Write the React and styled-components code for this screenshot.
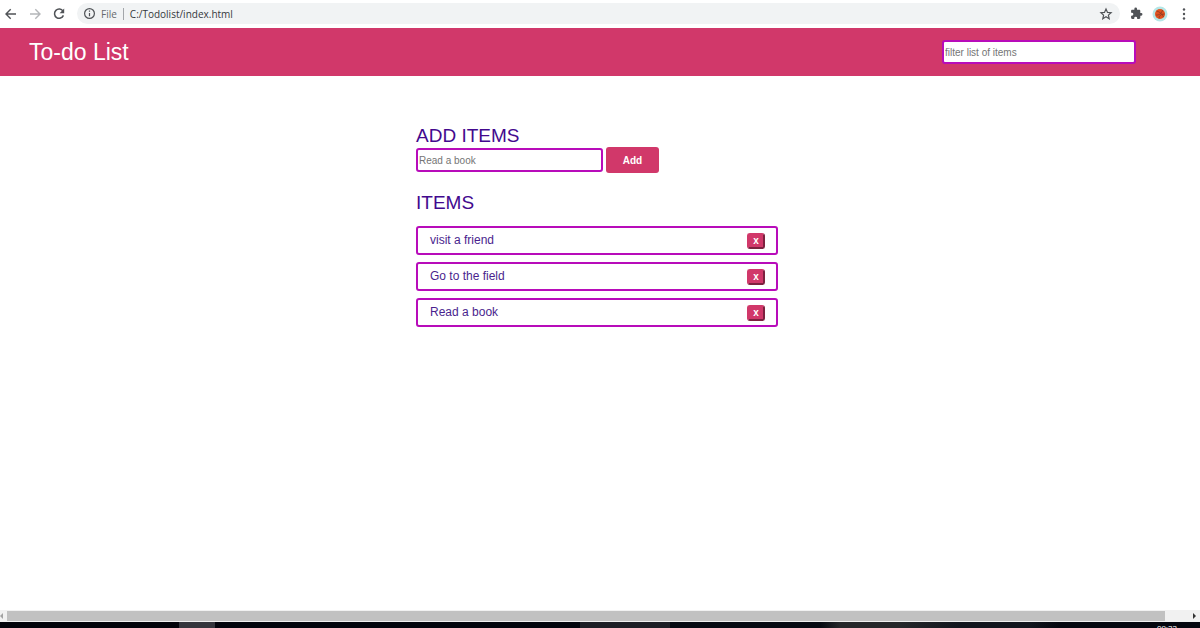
import React, { useState } from "react";
import styled, { createGlobalStyle } from "styled-components";

const GlobalStyle = createGlobalStyle`
  * { box-sizing: border-box; }
  body { margin: 0; background: #fff; font-family: "Liberation Sans", Arial, sans-serif; }
  button, input { font-family: inherit; margin: 0; }
`;

const Window = styled.div`
  display: flex;
  flex-direction: column;
  height: 100vh;
  overflow: hidden;
`;

const BrowserBar = styled.nav`
  display: flex;
  align-items: center;
  flex: none;
  height: 28px;
  padding: 0 8px 1px 3px;
  gap: 8px;
`;

const IconButton = styled.button`
  display: flex;
  align-items: center;
  justify-content: center;
  flex: none;
  width: 16px;
  height: 16px;
  padding: 0;
  border: 0;
  background: none;
  color: ${(p) => (p.$faded ? "#b4b6b9" : "#505357")};
`;

const AddressBar = styled.div`
  display: flex;
  align-items: center;
  flex: 1;
  height: 21px;
  padding: 0 6px 0 5px;
  margin-left: 2px;
  border-radius: 11px;
  background: #f1f3f4;
  font: 10px/16px "Open Sans", "Noto Sans", sans-serif;
  color: #66696d;
`;

const Scheme = styled.span`
  margin-left: 4px;
  padding-right: 6px;
  border-right: 1px solid #a3a6aa;
  line-height: 12px;
`;

const Url = styled.span`
  flex: 1;
  margin-left: 6px;
  color: #35383c;
`;

const Tools = styled.div`
  display: flex;
  align-items: center;
  gap: 8px;
`;

const Header = styled.header`
  display: flex;
  align-items: center;
  justify-content: space-between;
  flex: none;
  height: 48px;
  padding: 0 64px 0 29px;
  background: #d1386a;
`;

const Title = styled.h1`
  margin: 0;
  font-size: 23px;
  line-height: 28px;
  font-weight: 400;
  color: #fff;
`;

const TextBox = styled.input`
  width: ${(p) => p.$width};
  height: 24px;
  padding: 0 1px;
  border: 2px solid #b80cba;
  border-radius: 3px;
  background: #fff;
  font-size: 10px;
  color: #333;
  outline: none;
  &::placeholder { color: #757575; opacity: 1; }
`;

const Page = styled.main`
  flex: 1;
  padding: 49px 6px 0 0;
`;

const Content = styled.div`
  width: 362px;
  max-width: 100%;
  margin: 0 auto;
`;

const Heading = styled.h2`
  margin: 0;
  font-size: 19px;
  line-height: 22px;
  font-weight: 400;
  color: #42098e;
`;

const AddForm = styled.form`
  display: flex;
  align-items: center;
  gap: 3px;
  margin-bottom: 19px;
`;

const AddButton = styled.button`
  width: 53px;
  height: 26px;
  padding: 0;
  border: 0;
  border-radius: 3px;
  background: #d1386a;
  color: #fff;
  font-size: 10px;
  font-weight: 700;
`;

const List = styled.ul`
  display: flex;
  flex-direction: column;
  gap: 7px;
  margin: 12px 0 0;
  padding: 0;
  list-style: none;
`;

const Item = styled.li`
  display: flex;
  align-items: flex-start;
  justify-content: space-between;
  height: 29px;
  padding: 4px 11px 0 12px;
  border: 2px solid #b80cba;
  border-radius: 3px;
  font-size: 12px;
  line-height: 16px;
  color: #4a1f8e;
`;

const RemoveButton = styled.button`
  width: 18px;
  height: 16px;
  margin-top: 1px;
  padding: 0;
  border: 2px outset #d1386a;
  border-radius: 3px;
  background: #d1386a;
  color: #fff;
  font-size: 10px;
  line-height: 12px;
  font-weight: 700;
`;

const ScrollBar = styled.div`
  display: flex;
  align-items: center;
  flex: none;
  height: 12px;
  background: #f1f1f1;
`;

const Thumb = styled.div`
  flex: 1;
  height: 10px;
  background: #c1c1c1;
`;

const ScrollEnd = styled.div`
  display: flex;
  align-items: center;
  justify-content: flex-end;
  width: ${(p) => p.$width};
  padding-right: 4px;
`;

const TaskBar = styled.footer`
  display: flex;
  justify-content: flex-end;
  flex: none;
  height: 6px;
  padding-right: 23px;
  overflow: hidden;
  background: linear-gradient(90deg, #02030a 0 179px, #34353c 179px 215px, #02040c 215px 580px, #1c1e25 580px 670px, #060a12 670px 820px, #25272a 840px 900px, #11151d 960px 1030px, #04060e 1060px);
`;

const Clock = styled.time`
  font-size: 8px;
  line-height: 14px;
  color: #fff;
`;

const BackIcon = () => (
  <svg width="16" height="16" viewBox="0 0 16 16" fill="none" stroke="currentColor" strokeWidth="1.4">
    <path d="M13 8H3M7.7 3.2 3 8l4.700 4.800" />
  </svg>
);

const ForwardIcon = () => (
  <svg width="16" height="16" viewBox="0 0 16 16" fill="none" stroke="currentColor" strokeWidth="1.4">
    <path d="M3 8h10M8.300 3.200 13 8l-4.700 4.800" />
  </svg>
);

const ReloadIcon = () => (
  <svg width="16" height="16" viewBox="0 0 16 16" fill="none">
    <path d="M12 5.2A4.6 4.6 0 1 0 12.4 9.4" stroke="currentColor" strokeWidth="1.5" />
    <path d="M13.2 2.6v4.6H8.6z" fill="currentColor" />
  </svg>
);

const InfoIcon = () => (
  <svg width="15" height="15" viewBox="0 0 15 15" fill="none" stroke="#4f5256" strokeWidth="1.2">
    <circle cx="7.5" cy="7.5" r="4.9" />
    <path d="M7.5 7v3.2M7.5 4.6v1.2" />
  </svg>
);

const StarIcon = () => (
  <svg width="16" height="16" viewBox="0 0 16 16" fill="none" stroke="currentColor" strokeWidth="1.2">
    <path d="m8 3 1.5 3.4 3.6.3-2.7 2.4.8 3.6L8 10.8l-3.2 1.9.8-3.6-2.7-2.4 3.6-.3z" />
  </svg>
);

const PuzzleIcon = () => (
  <svg width="13" height="13" viewBox="0 0 24 24" fill="currentColor">
    <path d="M20.5 11H19V7c0-1.1-.9-2-2-2h-4V3.5a2.5 2.5 0 0 0-5 0V5H4c-1.1 0-2 .9-2 2v3.8h1.5a2.7 2.7 0 0 1 0 5.4H2V20c0 1.1.9 2 2 2h3.800v-1.500a2.700 2.700 0 0 1 5.400 0V22H17c1.100 0 2-.9 2-2v-4h1.500a2.500 2.500 0 0 0 0-5z" />
  </svg>
);

const BallIcon = () => (
  <svg width="16" height="16" viewBox="0 0 16 16" fill="none">
    <circle cx="8" cy="8" r="7.500" fill="#b4e6e6" />
    <circle cx="8" cy="8" r="5" fill="#e2521f" />
    <path d="M4.500 5c3 .6 6 3 7 6M4 9c3 .5 6-2 6.500-5M7 12.500c0-3 2-4.500 5.500-4.500" stroke="#7d3a25" strokeWidth=".7" />
  </svg>
);

const MenuIcon = () => (
  <svg width="16" height="16" viewBox="0 0 16 16" fill="currentColor">
    <circle cx="8" cy="3.500" r="1.200" />
    <circle cx="8" cy="8" r="1.200" />
    <circle cx="8" cy="12.500" r="1.200" />
  </svg>
);

export default function App() {
  const [items, setItems] = useState(["visit a friend", "Go to the field", "Read a book"]);
  const [filter, setFilter] = useState("");
  const [draft, setDraft] = useState("");

  const addItem = (event) => {
    event.preventDefault();
    if (draft.trim()) setItems([...items, draft.trim()]);
    setDraft("");
  };

  return (
    <Window>
      <GlobalStyle />
      <BrowserBar aria-label="Browser">
        <IconButton aria-label="Back"><BackIcon /></IconButton>
        <IconButton aria-label="Forward" $faded><ForwardIcon /></IconButton>
        <IconButton aria-label="Reload"><ReloadIcon /></IconButton>
        <AddressBar>
          <InfoIcon />
          <Scheme>File</Scheme>
          <Url>C:/Todolist/index.html</Url>
          <IconButton aria-label="Bookmark"><StarIcon /></IconButton>
        </AddressBar>
        <Tools>
          <IconButton aria-label="Extensions"><PuzzleIcon /></IconButton>
          <IconButton aria-label="Profile"><BallIcon /></IconButton>
          <IconButton aria-label="Menu"><MenuIcon /></IconButton>
        </Tools>
      </BrowserBar>
      <Header>
        <Title>To-do List</Title>
        <TextBox
          $width="194px"
          aria-label="Filter items"
          placeholder="filter list of items"
          value={filter}
          onChange={(e) => setFilter(e.target.value)}
        />
      </Header>
      <Page>
        <Content>
          <Heading>ADD ITEMS</Heading>
          <AddForm onSubmit={addItem}>
            <TextBox
              $width="187px"
              aria-label="New item"
              placeholder="Read a book"
              value={draft}
              onChange={(e) => setDraft(e.target.value)}
            />
            <AddButton type="submit">Add</AddButton>
          </AddForm>
          <Heading>ITEMS</Heading>
          <List>
            {items
              .filter((text) => text.toLowerCase().includes(filter.toLowerCase()))
              .map((text) => (
                <Item key={text}>
                  {text}
                  <RemoveButton
                    type="button"
                    aria-label={`Remove ${text}`}
                    onClick={() => setItems(items.filter((other) => other !== text))}
                  >
                    x
                  </RemoveButton>
                </Item>
              ))}
          </List>
        </Content>
      </Page>
      <ScrollBar>
        <ScrollEnd $width="7px">
          <svg width="3" height="6" viewBox="0 0 3 6"><path d="M3 0v6L0 3z" fill="#a3a3a3" /></svg>
        </ScrollEnd>
        <Thumb />
        <ScrollEnd $width="35px">
          <svg width="3" height="6" viewBox="0 0 3 6"><path d="M0 0v6l3-3z" fill="#333" /></svg>
        </ScrollEnd>
      </ScrollBar>
      <TaskBar>
        <Clock>09:33</Clock>
      </TaskBar>
    </Window>
  );
}
